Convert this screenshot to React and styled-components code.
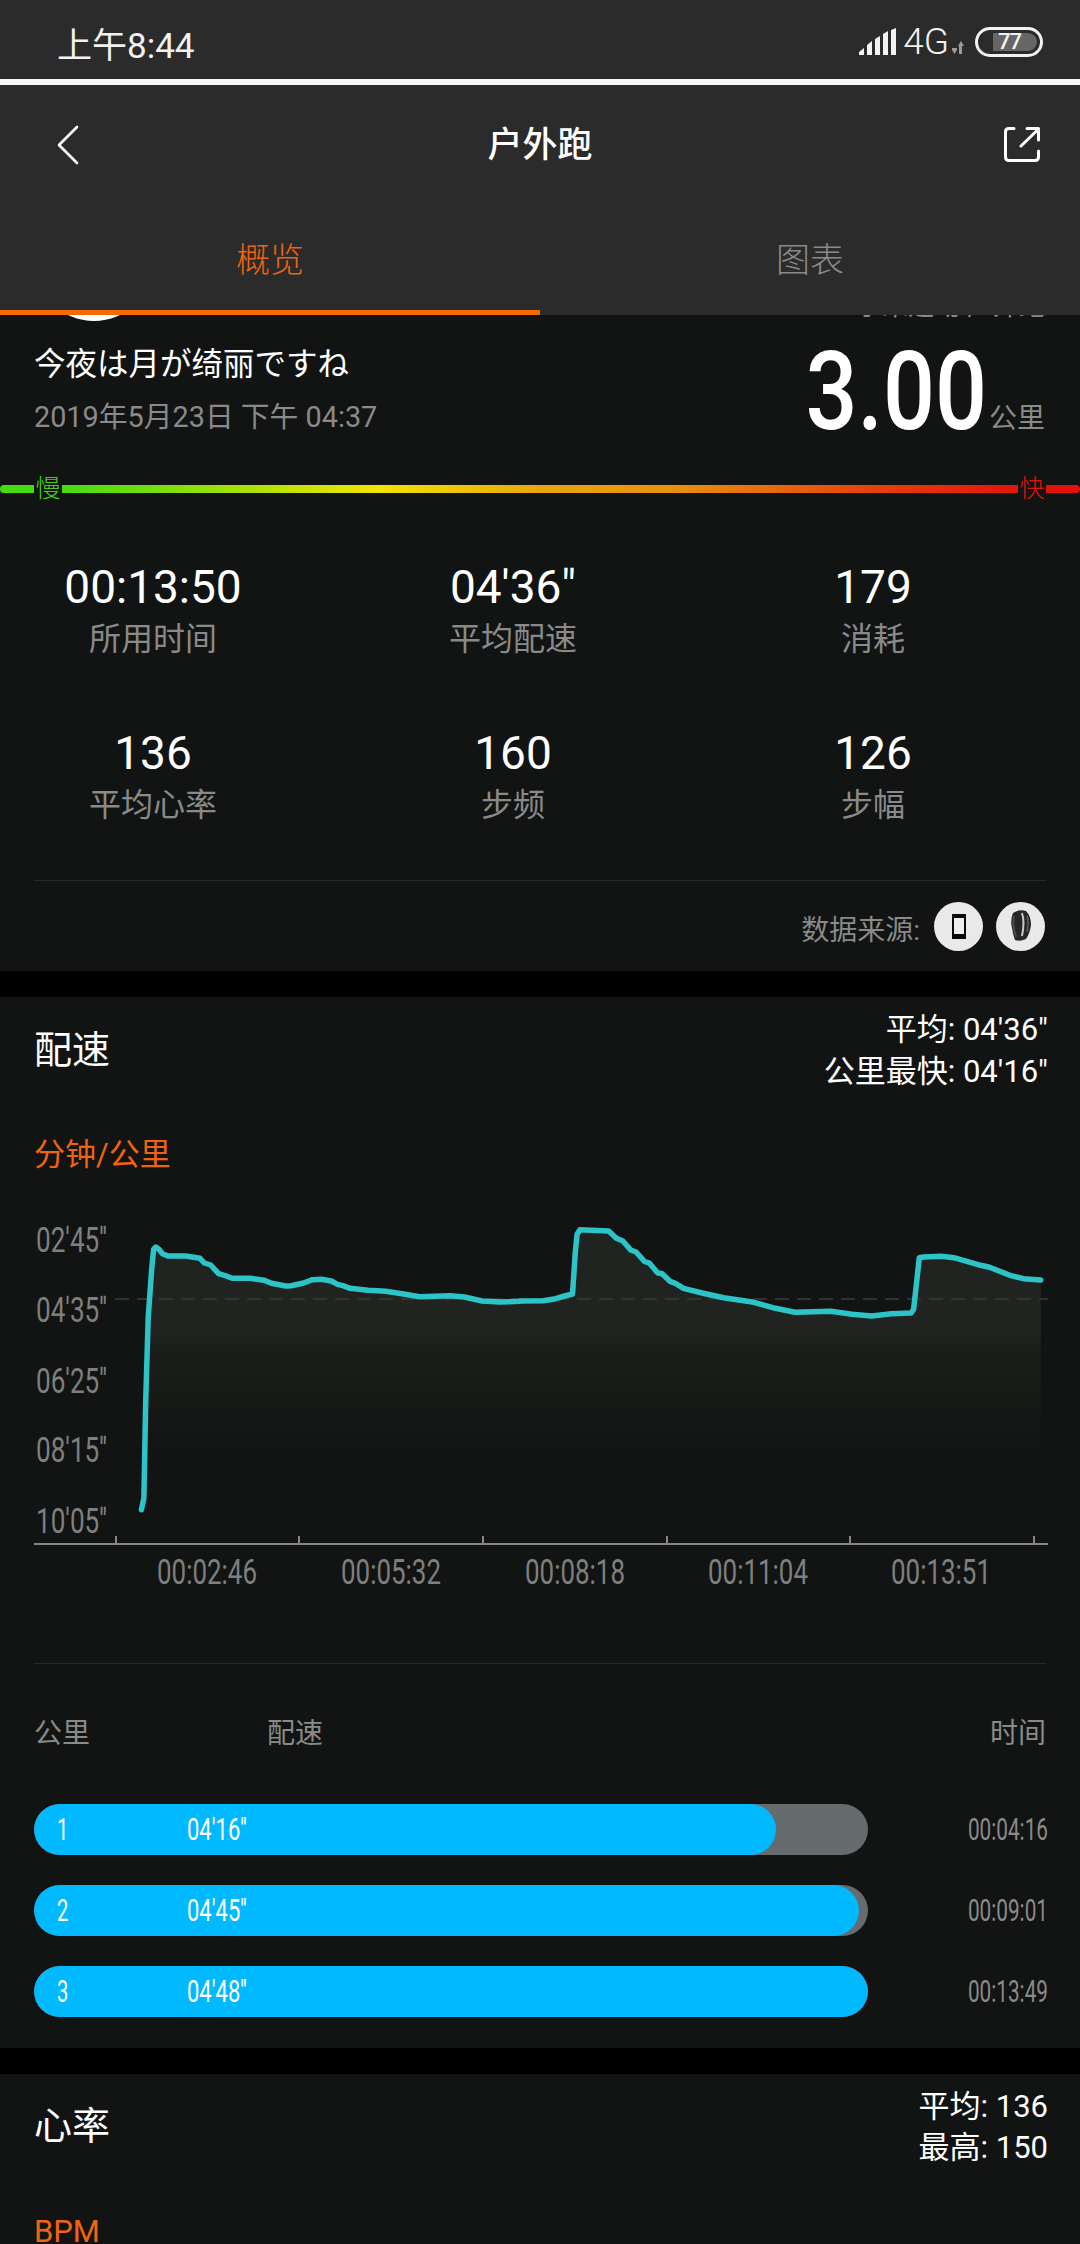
import React from "react";
import styled, { createGlobalStyle } from "styled-components";

const SANS = `Roboto, "Noto Sans CJK SC", sans-serif`;
const GREY = "#8a8a8a";
const ORANGE = "#f0640f";
const CARD = "#111412";

const Global = createGlobalStyle`
  html, body { margin: 0; padding: 0; background: #000; }
  body { font-family: ${SANS}; }
`;

const Page = styled.div`
  width: 1080px; height: 2244px; overflow: hidden; background: #000; color: #fff;
`;
const StatusBar = styled.div`
  height: 79px; background: #2b2b2b; display: flex; align-items: center;
  justify-content: space-between; padding: 5px 37px 0 57px; box-sizing: border-box;
`;
const Clock = styled.div`font-size: 35px; color: #f2f2f2;`;
const StatusRight = styled.div`display: flex; align-items: center;`;
const Net = styled.span`font-size: 37px; font-weight: 300; margin: 0 2px 0 6px; color: #f2f2f2; line-height: 30px;`;
const Battery = styled.div`
  width: 68px; height: 30px; box-sizing: border-box; border: 3px solid #f2f2f2; border-radius: 15px;
  margin-left: 10px; padding: 3px 3px 3px 15px; display: flex;
`;
const BatteryFill = styled.div`
  flex: 1; background: #666; border-radius: 0 9px 9px 0; font-size: 22px; font-weight: 500; line-height: 18px;
  color: #f2f2f2; padding-left: 5px; letter-spacing: -1px;
`;
const WhiteLine = styled.div`height: 6px; background: #f5f7fa;`;
const NavBar = styled.div`
  height: 120px; background: #2b2b2b; display: grid; grid-template-columns: 1fr auto 1fr;
  align-items: center; padding: 0 40px;
`;
const NavStart = styled.div`display: flex; padding-left: 17px;`;
const NavTitle = styled.div`font-size: 35px; font-weight: 500; padding-bottom: 8px;`;
const NavEnd = styled.div`justify-self: end; display: flex;`;
const Tabs = styled.div`height: 110px; background: #2b2b2b; display: flex;`;
const Tab = styled.div`
  flex: 1; display: flex; align-items: center; justify-content: center; box-sizing: border-box;
  font-size: 34px; font-weight: 300; color: ${p => (p.$active ? ORANGE : GREY)};
  border-bottom: 5px solid ${p => (p.$active ? "#f56a00" : "transparent")};
`;
const Card = styled.section`background: ${CARD};`;
const GapCard = styled(Card)`margin-top: 26px;`;
const Peek = styled.div`
  height: 6px; overflow: hidden; display: flex; justify-content: space-between; align-items: flex-end;
  padding: 0 35px;
`;
const Avatar = styled.div`width: 118px; height: 118px; border-radius: 50%; background: #fff; flex: none;`;
const PeekText = styled.div`font-size: 26px; line-height: 32px; color: ${GREY}; margin-bottom: -1px;`;
const Summary = styled.div`display: flex; justify-content: space-between; height: 119px; padding: 0 35px 0 34px;`;
const Names = styled.div`padding-top: 28px;`;
const RunName = styled.div`font-size: 31.5px; line-height: 32px;`;
const RunDate = styled.div`font-size: 28.8px; line-height: 32px; color: ${GREY}; margin-top: 20px;`;
const DistanceBox = styled.div`display: flex; align-items: flex-start;`;
const Distance = styled.div`
  font-size: 109px; font-weight: 500; line-height: 108px; margin-top: 17px; margin-left: -33px;
  transform: scaleX(.84); transform-origin: right center;
`;
const DistanceUnit = styled.div`font-size: 28px; line-height: 32px; color: ${GREY}; margin: 82px 0 0 2px;`;
const Slider = styled.div`display: flex; align-items: center; height: 24px; margin-top: 37px;`;
const Cap = styled.div`width: ${p => p.$w}px; height: 8px; background: ${p => p.$c}; border-radius: ${p => p.$r};`;
const SliderLabel = styled.div`
  width: 28px; text-align: center; font-size: 25px; font-weight: 300; line-height: 24px; color: ${p => p.$c}; flex: none;
`;
const SliderBar = styled.div`
  flex: 1; height: 8px;
  background: linear-gradient(90deg, #43dc12 0%, #f2e400 33%, #e8a60e 50%, #e8900e 64%, #e6410c 85%, #e4130a 100%);
`;
const StatGrid = styled.div`
  display: grid; grid-template-columns: 306px 414px 306px; row-gap: 68px; padding-top: 60px;
`;
const Stat = styled.div`text-align: center;`;
const StatValue = styled.div`font-size: 46px; line-height: 52px;`;
const StatLabel = styled.div`font-size: 32px; line-height: 40px; color: ${GREY}; margin-top: 6px;`;
const Divider = styled.div`height: 1px; background: #262926; margin: ${p => p.$top}px 34px 0;`;
const SourceRow = styled.div`
  height: 90px; display: flex; align-items: center; justify-content: flex-end; padding-right: 35px; gap: 13px;
`;
const SourceLabel = styled.div`font-size: 28px; color: ${GREY}; padding-top: 4px; margin-right: 1px;`;
const SourceIcon = styled.div`
  width: 49px; height: 49px; border-radius: 50%; background: #e9e9e9; display: flex;
  align-items: center; justify-content: center;
`;
const SectionHead = styled.div`
  display: flex; justify-content: space-between; align-items: center; padding: 12px 32px 0 34px;
`;
const SectionTitle = styled.div`font-size: 38px; padding-bottom: 9px;`;
const SectionMeta = styled.div`font-size: 31px; line-height: ${p => p.$lh}px; text-align: right;`;
const Unit = styled.div`font-size: 31px; line-height: 40px; color: ${ORANGE}; padding-left: 34px; margin-top: ${p => p.$top}px;`;
const ChartSvg = styled.svg`display: block;`;
const TableHead = styled.div`
  display: grid; grid-template-columns: 233px 1fr auto; font-size: 28px; line-height: 40px;
  color: ${GREY}; padding: 0 34px; margin-top: 50px;
`;
const Splits = styled.div`
  display: flex; flex-direction: column; gap: 30px; padding: 50px 32px 31px 34px;
`;
const SplitRow = styled.div`display: flex; align-items: center; justify-content: space-between;`;
const Track = styled.div`width: 834px; height: 51px; border-radius: 26px; background: #666b6d; overflow: hidden;`;
const Fill = styled.div`
  height: 100%; background: #00b9ff; border-radius: 26px; display: flex; align-items: center;
  font-size: 31px; line-height: 51px; color: #fff;
`;
const SplitNo = styled.span`width: 153px; padding-left: 23px; box-sizing: border-box; flex: none;`;
const Squeezed = styled.span`display: inline-block; transform: scaleX(${p => p.$x}); transform-origin: left center;`;
const SplitTime = styled.div`
  font-size: 31px; line-height: 51px; color: ${GREY}; transform: scaleX(.67); transform-origin: right center;
  width: 80px; display: flex; justify-content: flex-end; white-space: nowrap;
`;

const toZ4 = ([x, y]) => [x / 2.8, 1200 + y / 3];
const toZ5 = ([x, y]) => [520 + x / 2.8, 1200 + y / 3];
const LINE = [
  ...[[396,926],[403,890],[408,600],[415,350],[425,200],[430,145],[436,138],[445,145],[455,158],[470,165],[520,165],[560,172],[572,186],[590,192],[612,218],[628,223],[650,232],[700,232],[740,238],[760,247],[800,255],[815,254],[850,246],[875,236],[900,235],[928,240],[945,250],[960,254],[980,262],[1030,268],[1080,271],[1130,279],[1175,287],[1260,284],[1300,288],[1350,300],[1400,303],[1456,301]].map(toZ4),
  ...[[0,300],[65,299],[100,293],[125,285],[147,279],[155,150],[160,100],[168,86],[248,90],[270,112],[288,120],[310,147],[325,153],[348,181],[362,186],[385,215],[398,218],[420,241],[435,247],[458,262],[510,276],[570,290],[655,304],[715,322],[770,334],[870,331],[930,340],[985,345],[1040,338],[1095,336],[1102,325],[1110,250],[1118,170],[1130,168],[1180,166],[1215,170],[1290,193],[1315,199],[1375,224],[1410,233],[1458,237]].map(toZ5),
];
const linePath = LINE.map(p => `${p[0].toFixed(1)},${p[1].toFixed(1)}`).join(" ");
const fillPath = `M${linePath} L1041,1508 L141,1508 Z`;
const Y_LABELS = [["02'45''", 1240], ["04'35''", 1310], ["06'25''", 1381], ["08'15''", 1450], ["10'05''", 1521]];
const X_LABELS = [["00:02:46", 207], ["00:05:32", 391], ["00:08:18", 575], ["00:11:04", 758], ["00:13:51", 941]];
const TICKS = [116, 299, 483, 667, 850, 1034];

const Chart = () => (
  <ChartSvg width="1080" height="426" viewBox="0 1174 1080 426">
    <defs>
      <linearGradient id="area" gradientUnits="userSpaceOnUse" x1="0" y1="1225" x2="0" y2="1458">
        <stop offset="0" stopColor="#1f2320" />
        <stop offset=".45" stopColor="#212320" />
        <stop offset=".55" stopColor="#1b1d1a" />
        <stop offset=".75" stopColor="#171917" />
        <stop offset="1" stopColor={CARD} />
      </linearGradient>
    </defs>
    <path d={fillPath} fill="url(#area)" />
    <line x1="115" x2="1048" y1="1298" y2="1298" stroke="#3a3c39" strokeWidth="1.5" strokeDasharray="14 8" />
    <polyline points={linePath} fill="none" stroke="#2dc4c8" strokeWidth="5.5" strokeLinejoin="round" strokeLinecap="round" />
    <line x1="34" x2="1048" y1="1543" y2="1543" stroke="#868686" strokeWidth="2" />
    {TICKS.map(x => <line key={x} x1={x} x2={x} y1="1535" y2="1543" stroke="#868686" strokeWidth="2" />)}
    {Y_LABELS.map(([t, y]) => (
      <text key={t} x="36" y={y + 11} fontFamily={SANS} fontSize="35" fill="#7f7f7f" textLength="71" lengthAdjust="spacingAndGlyphs">{t}</text>
    ))}
    {X_LABELS.map(([t, x]) => (
      <text key={t} x={x - 50} y="1583" fontFamily={SANS} fontSize="35" fill="#7f7f7f" textLength="100" lengthAdjust="spacingAndGlyphs">{t}</text>
    ))}
  </ChartSvg>
);

const SPLITS = [
  { n: 1, pace: "04'16''", time: "00:04:16", pct: 742 / 834 },
  { n: 2, pace: "04'45''", time: "00:09:01", pct: 825 / 834 },
  { n: 3, pace: "04'48''", time: "00:13:49", pct: 1 },
];
const STATS = [
  ["00:13:50", "所用时间"], ["04'36\"", "平均配速"], ["179", "消耗"],
  ["136", "平均心率"], ["160", "步频"], ["126", "步幅"],
];

export default function App() {
  return (
    <Page>
      <Global />
      <StatusBar>
        <Clock>上午8:44</Clock>
        <StatusRight>
          <svg width="38" height="28" viewBox="0 0 38 28">
            <path fill="#f2f2f2" d="M0 27V24L5 20V27ZM8 27V17L13 13V27ZM16 27V11L21 8V27ZM24 27V6L29 3V27ZM32 27V2L37 0V27Z" />
          </svg>
          <Net>4G</Net>
          <svg width="14" height="14" viewBox="0 0 14 14" style={{ marginTop: 12 }}>
            <path fill="#9a9a9a" d="M1 7H6V9L3.5 13L1 9ZM8 13V5H7L10 0L13 5H11V13Z" />
          </svg>
          <Battery><BatteryFill>77</BatteryFill></Battery>
        </StatusRight>
      </StatusBar>
      <WhiteLine />
      <NavBar>
        <NavStart>
          <svg width="22" height="40" viewBox="0 0 22 40">
            <path d="M20 2L2 20L20 38" fill="none" stroke="#fff" strokeWidth="2.6" strokeLinecap="round" strokeLinejoin="round" />
          </svg>
        </NavStart>
        <NavTitle>户外跑</NavTitle>
        <NavEnd>
          <svg width="36" height="36" viewBox="0 0 36 36">
            <path d="M10 1.5H5Q1.5 1.5 1.5 5V30Q1.5 33.5 5 33.5H31Q34.5 33.5 34.5 30V24M17 19L34 2.5M23 1.5H34.5V13" fill="none" stroke="#fff" strokeWidth="3" strokeLinecap="round" strokeLinejoin="round" />
          </svg>
        </NavEnd>
      </NavBar>
      <Tabs>
        <Tab $active>概览</Tab>
        <Tab>图表</Tab>
      </Tabs>
      <Card>
        <Peek>
          <Avatar />
          <PeekText>小米运动·户外跑</PeekText>
        </Peek>
        <Summary>
          <Names>
            <RunName>今夜は月が绮丽ですね</RunName>
            <RunDate>2019年5月23日 下午 04:37</RunDate>
          </Names>
          <DistanceBox>
            <Distance>3.00</Distance>
            <DistanceUnit>公里</DistanceUnit>
          </DistanceBox>
        </Summary>
        <Slider>
          <Cap $w={34} $c="#43dc12" $r="4px 0 0 4px" />
          <SliderLabel $c="#3fd40f">慢</SliderLabel>
          <SliderBar />
          <SliderLabel $c="#e4130a">快</SliderLabel>
          <Cap $w={34} $c="#e4130a" $r="0 4px 4px 0" />
        </Slider>
        <StatGrid>
          {STATS.map(([v, l]) => (
            <Stat key={l}>
              <StatValue>{v}</StatValue>
              <StatLabel>{l}</StatLabel>
            </Stat>
          ))}
        </StatGrid>
        <Divider $top={55} />
        <SourceRow>
          <SourceLabel>数据来源:</SourceLabel>
          <SourceIcon>
            <svg width="14" height="25" viewBox="0 0 14 25">
              <rect width="14" height="25" fill="#0a0a0a" />
              <rect x="2" y="4" width="10" height="16" fill="#eee" />
            </svg>
          </SourceIcon>
          <SourceIcon>
            <svg width="22" height="32" viewBox="0 0 22 32">
              <path d="M3 3Q9 -1 16 1Q21 6 21 15Q20 23 16 29Q10 32 5 30Q3 25 2 18Q0 10 3 3Z" fill="#262626" />
              <path d="M4 6Q2 14 6 27" fill="none" stroke="#4a4a4a" strokeWidth="2" />
              <path d="M12 3Q15 12 12 26" fill="none" stroke="#c8c8c8" strokeWidth="2" />
              <path d="M17 6Q19 13 17 22" fill="none" stroke="#555" strokeWidth="2" />
            </svg>
          </SourceIcon>
        </SourceRow>
      </Card>
      <GapCard>
        <SectionHead>
          <SectionTitle>配速</SectionTitle>
          <SectionMeta $lh={42}>
            <div>平均: 04'36"</div>
            <div>公里最快: 04'16"</div>
          </SectionMeta>
        </SectionHead>
        <Unit $top={42}>分钟/公里</Unit>
        <Chart />
        <Divider $top={62} />
        <TableHead>
          <span>公里</span>
          <span>配速</span>
          <span>时间</span>
        </TableHead>
        <Splits>
          {SPLITS.map(s => (
            <SplitRow key={s.n}>
              <Track>
                <Fill style={{ width: `${s.pct * 100}%` }}>
                  <SplitNo><Squeezed $x={0.65}>{s.n}</Squeezed></SplitNo>
                  <Squeezed $x={0.71}>{s.pace}</Squeezed>
                </Fill>
              </Track>
              <SplitTime>{s.time}</SplitTime>
            </SplitRow>
          ))}
        </Splits>
      </GapCard>
      <GapCard>
        <SectionHead>
          <SectionTitle>心率</SectionTitle>
          <SectionMeta $lh={41}>
            <div>平均: 136</div>
            <div>最高: 150</div>
          </SectionMeta>
        </SectionHead>
        <Unit $top={44}>BPM</Unit>
      </GapCard>
    </Page>
  );
}
